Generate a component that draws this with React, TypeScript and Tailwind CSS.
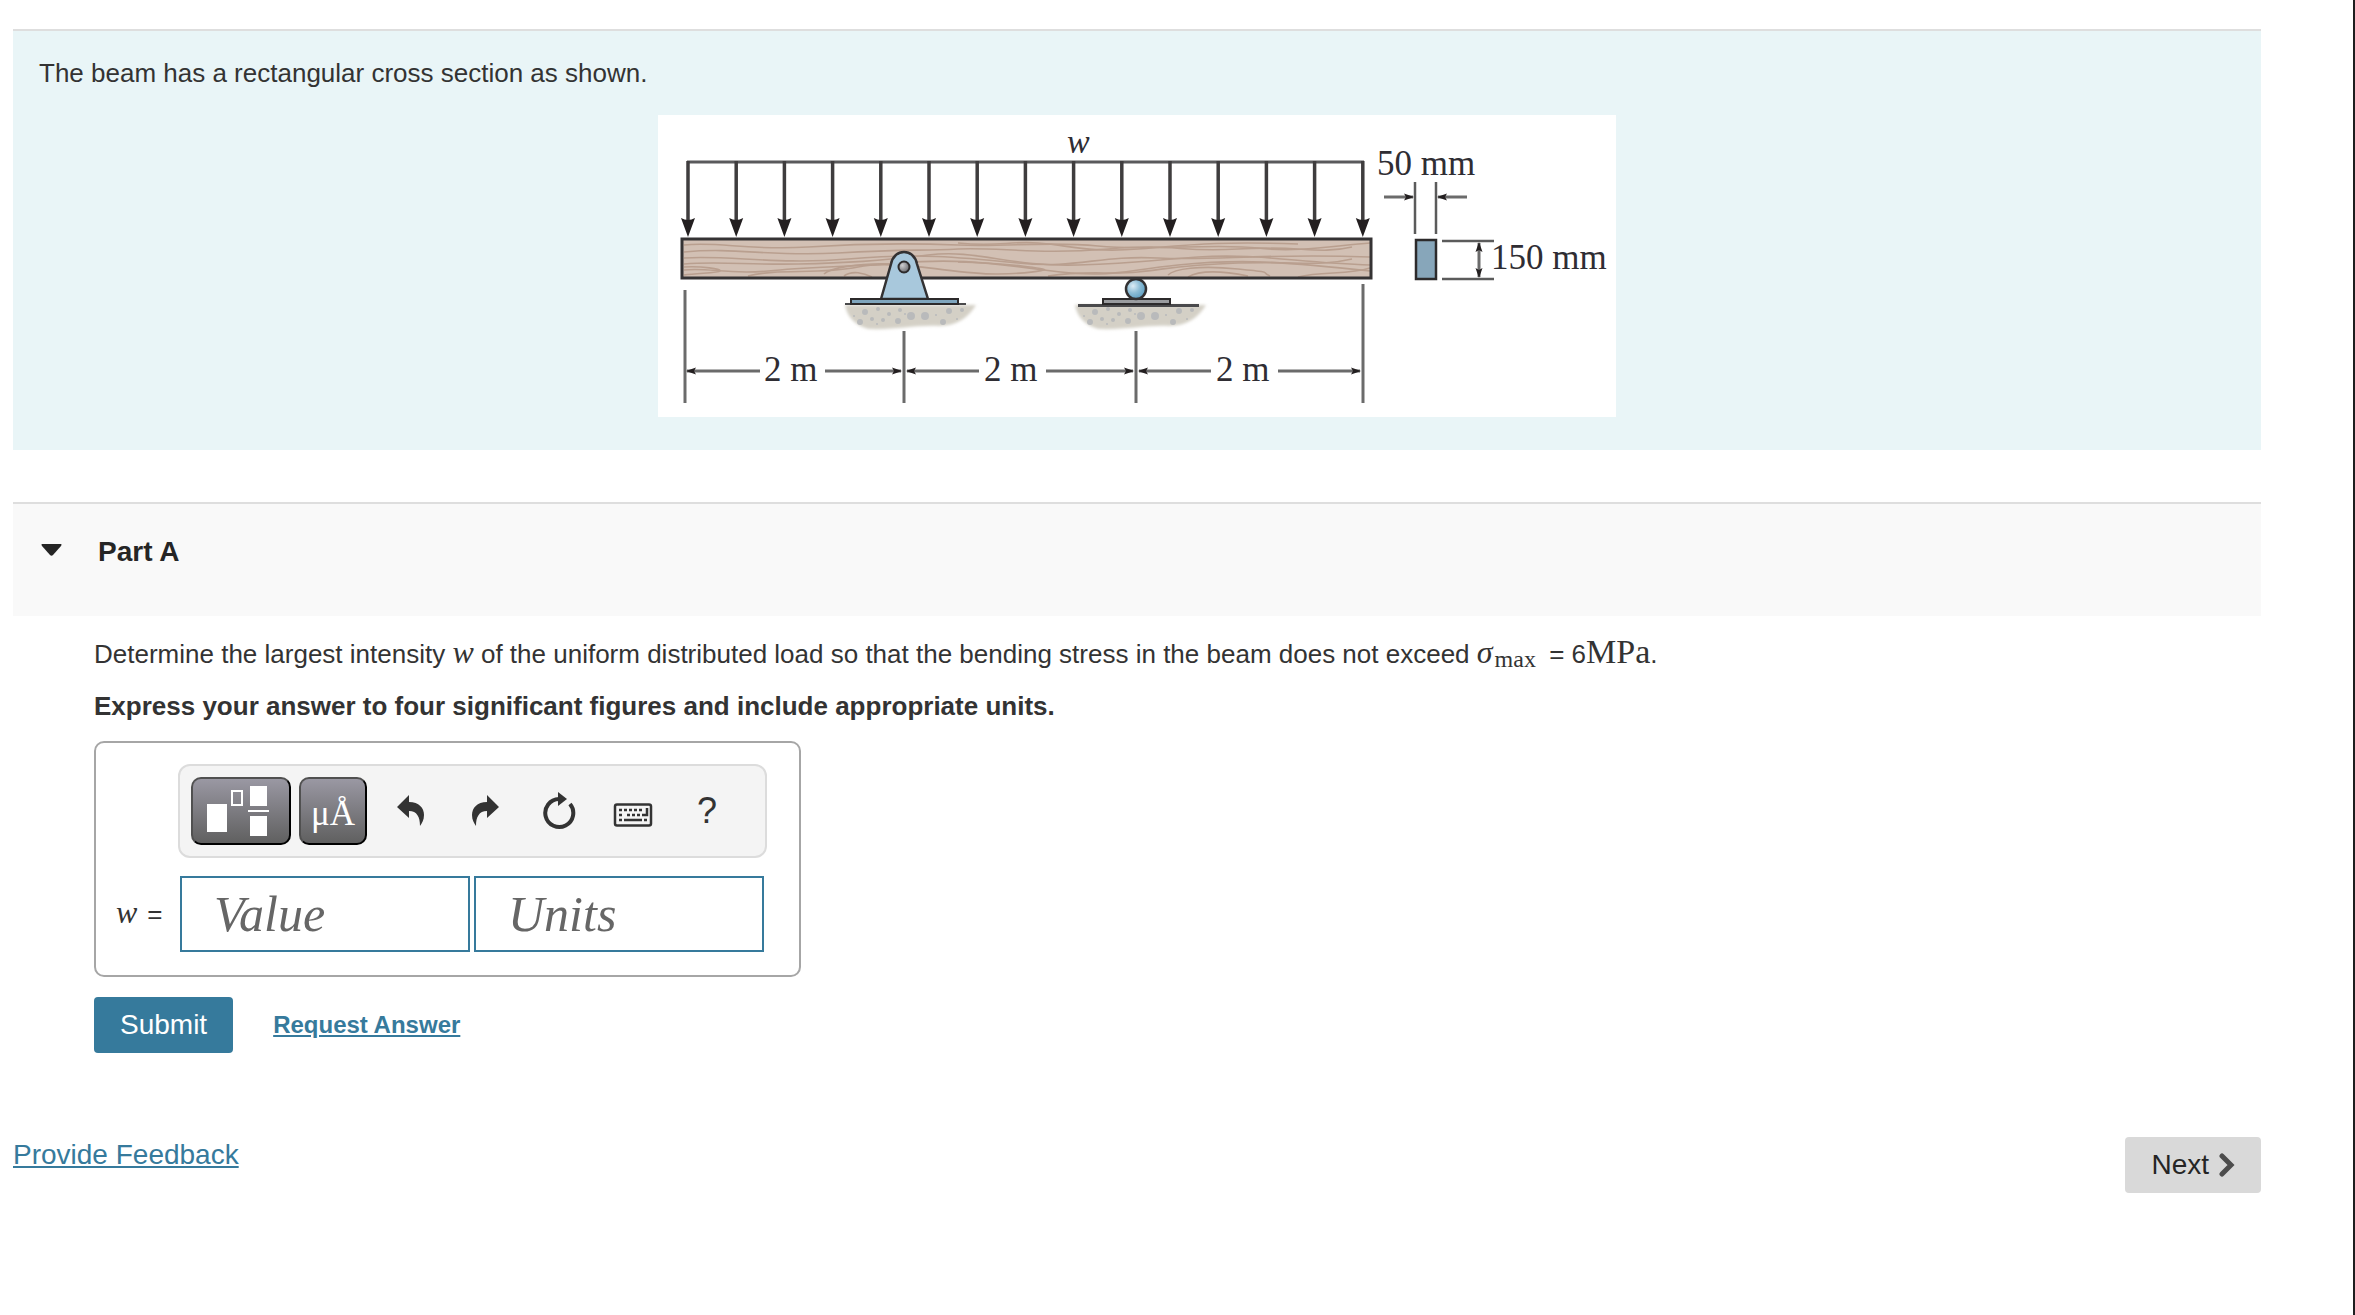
import React from 'react';

const LOAD_ARROWS = Array.from({ length: 15 }, (_, i) => 30 + i * 48.2);

const WOOD_GRAIN = [
  'M26 130 C60 126 90 136 150 132 S250 128 300 130 S390 126 440 131 S560 128 600 133 S680 130 712 128',
  'M26 137 C80 132 110 142 180 138 S260 136 300 134 S380 140 450 134 S520 138 580 134 S660 140 694 132',
  'M26 143 C70 140 120 150 190 144 S300 142 360 148 S440 140 500 143 S600 138 712 142',
  'M26 149 C60 146 90 150 140 149 S220 146 270 140 S350 152 420 150 S480 146 540 142 S640 148 712 150',
  'M26 155 C50 152 70 160 110 156 S190 152 240 148 S320 146 386 155 S460 156 520 150 S620 146 712 156',
  'M26 160 C40 158 60 158 62 156 S44 151 26 152',
  'M90 161 C120 153 160 160 200 152 S300 160 340 159 S380 156 386 155 S350 148 300 147',
  'M166 159 C172 153 200 148 232 149',
  'M186 161 C194 155 206 158 214 162',
  'M300 128 C340 132 350 126 380 128 S430 138 480 134 S560 126 640 129',
  'M390 161 C430 155 450 160 480 157 S520 150 580 148 S660 152 694 144',
  'M510 160 C516 154 540 150 580 154 S600 156 612 161',
  'M530 162 C540 156 560 155 590 161',
  'M640 162 C664 156 690 160 712 153',
];

const PEBBLES = [
  [20, 7, 3], [33, 4, 2], [44, 9, 2], [55, 5, 2], [66, 11, 4], [80, 11, 4],
  [104, 6, 3], [117, 5, 2], [27, 14, 2], [38, 15, 2], [15, 17, 3], [53, 16, 3],
  [98, 17, 3], [9, 11, 1], [91, 10, 1], [112, 14, 1], [60, 9, 1], [32, 19, 1],
];

interface GroundProps {
  x: number;
  y: number;
}

function Ground({ x, y }: GroundProps) {
  return (
    <g transform={`translate(${x} ${y})`}>
      <path
        d="M0 0 H131 C124 12 112 21 94 21 C70 20 50 25 24 24 C8 20 2 10 0 0Z"
        fill="#d4d0c6"
        filter="url(#soft)"
      />
      {PEBBLES.map(([cx, cy, r]) => (
        <circle key={`${cx}-${cy}`} cx={cx} cy={cy} r={r} fill="#b9babb" />
      ))}
    </g>
  );
}

interface DimensionProps {
  x1: number;
  y1: number;
  x2: number;
  y2: number;
}

// Thin line with the arrowhead at its second end
function Dimension({ x1, y1, x2, y2 }: DimensionProps) {
  return (
    <line x1={x1} y1={y1} x2={x2} y2={y2} stroke="#6b6b6b" strokeWidth="3" markerEnd="url(#tip)" />
  );
}

function BeamFigure() {
  return (
    <svg
      viewBox="0 0 958 302"
      className="w-[958px] max-w-full bg-white"
      role="img"
      aria-label="Beam with a uniform distributed load w, a pin and a roller support"
    >
      <defs>
        <marker id="tip" markerUnits="userSpaceOnUse" markerWidth="10" markerHeight="8" refX="9" refY="4" orient="auto">
          <path d="M0 0.5 L10 4 L0 7.5 L2 4Z" fill="#231f20" />
        </marker>
        <filter id="soft" x="-10%" y="-20%" width="120%" height="140%">
          <feGaussianBlur stdDeviation="1.5" />
        </filter>
        <radialGradient id="roller" cx="0.35" cy="0.35" r="0.7">
          <stop offset="0" stopColor="#dcecf5" />
          <stop offset="0.5" stopColor="#8dbdd6" />
          <stop offset="1" stopColor="#5c9dc0" />
        </radialGradient>
        <radialGradient id="pin" cx="0.35" cy="0.35" r="0.7">
          <stop offset="0" stopColor="#d0d0d2" />
          <stop offset="1" stopColor="#68686c" />
        </radialGradient>
      </defs>

      {/* Distributed load */}
      <path d="M29 47 H706" stroke="#5a5a5c" strokeWidth="3" />
      {LOAD_ARROWS.map((x) => (
        <g key={x}>
          <line x1={x} y1="46" x2={x} y2="106" stroke="#3f3d3e" strokeWidth="3.5" />
          <path d={`M${x - 7} 103 Q${x} 107 ${x + 7} 103 L${x} 122Z`} fill="#231f20" />
        </g>
      ))}

      {/* Beam */}
      <rect x="24" y="124" width="689" height="39" fill="#d2c0b4" />
      <g fill="none" stroke="#b99f8f" strokeWidth="1.6">
        {WOOD_GRAIN.map((d) => (
          <path key={d} d={d} />
        ))}
      </g>
      <rect x="24" y="124" width="689" height="39" fill="none" stroke="#353334" strokeWidth="3" />

      {/* Pin support */}
      <Ground x={187} y={190} />
      <path d="M187 189 H308" stroke="#4a4a4c" strokeWidth="2" />
      <path
        d="M223 184 L233 149 C236 133 256 133 259 149 L270 184Z"
        fill="#a8c8dc"
        stroke="#333132"
        strokeWidth="2.5"
      />
      <rect x="193" y="184" width="107" height="5" fill="#7fa5bd" stroke="#2c2a2b" strokeWidth="2" />
      <circle cx="246" cy="152" r="5.5" fill="url(#pin)" stroke="#2c2a2b" strokeWidth="2" />

      {/* Roller support */}
      <Ground x={417} y={190} />
      <path d="M420 190.500 H541" stroke="#4a4a4c" strokeWidth="3" />
      <rect x="445" y="184" width="67" height="5" fill="#9a9c9f" stroke="#2c2a2b" strokeWidth="2" />
      <circle cx="478" cy="174" r="10" fill="url(#roller)" stroke="#333132" strokeWidth="2.5" />

      {/* Span dimensions */}
      <g stroke="#6b6b6b" strokeWidth="3">
        <path d="M27 175 V288" />
        <path d="M246 216 V288" />
        <path d="M478 216 V288" />
        <path d="M705 169 V288" />
      </g>
      <Dimension x1={102} y1={256} x2={29} y2={256} />
      <Dimension x1={167} y1={256} x2={243} y2={256} />
      <Dimension x1={321} y1={256} x2={249} y2={256} />
      <Dimension x1={388} y1={256} x2={475} y2={256} />
      <Dimension x1={553} y1={256} x2={481} y2={256} />
      <Dimension x1={620} y1={256} x2={702} y2={256} />

      {/* Cross section */}
      <path d="M757 67 V119 M778 67 V119 M784 126 H836 M784 164 H836" stroke="#5b5b5b" strokeWidth="2.5" />
      <rect x="758" y="125" width="20" height="39" fill="#87a6ba" stroke="#2c2a2b" strokeWidth="2.5" />
      <Dimension x1={726} y1={82} x2={755} y2={82} />
      <Dimension x1={809} y1={82} x2={780} y2={82} />
      <Dimension x1={821} y1={145} x2={821} y2={128} />
      <Dimension x1={821} y1={145} x2={821} y2={162} />

      <g fill="#2f2d33" className="font-['Liberation_Serif',serif] text-[35px]">
        <text x="409" y="38" className="text-[34px] italic">w</text>
        <text x="719" y="60">50 mm</text>
        <text x="833" y="154">150 mm</text>
        <text x="106" y="266">2 m</text>
        <text x="326" y="266">2 m</text>
        <text x="558" y="266">2 m</text>
      </g>
    </svg>
  );
}

function TemplateIcon() {
  return (
    <svg viewBox="0 0 64 52" className="h-[52px] w-16" aria-hidden="true">
      <rect x="0" y="19" width="20" height="28" fill="#fff" />
      <rect x="25" y="6" width="10" height="14" fill="none" stroke="#fff" strokeWidth="2" />
      <rect x="43" y="1" width="17" height="20" fill="#fff" />
      <rect x="41" y="25" width="21" height="2" fill="#fff" />
      <rect x="43" y="31" width="17" height="20" fill="#fff" />
    </svg>
  );
}

function UndoIcon({ flipped = false }: { flipped?: boolean }) {
  return (
    <svg viewBox="0 0 28 32" className="h-8 w-7" aria-hidden="true">
      <path
        transform={flipped ? 'matrix(-1 0 0 1 28 0)' : undefined}
        d="M0 12 L12 0 V7 C22 7 27 13 27 20 C27 25 25 28 23 31 C23 22 20 16 12 16 V23Z"
        fill="#333"
      />
    </svg>
  );
}

function ResetIcon() {
  return (
    <svg viewBox="0 0 34 38" className="h-[38px] w-[34px]" aria-hidden="true">
      <path d="M17 7 A14 14 0 1 0 28 12" fill="none" stroke="#333" strokeWidth="4" />
      <path d="M16 0 L25 7 L16 14Z" fill="#333" />
    </svg>
  );
}

function KeyboardIcon() {
  return (
    <svg viewBox="0 0 40 24" className="h-6 w-10" aria-hidden="true">
      <rect x="2" y="1.500" width="36" height="21" rx="2" fill="none" stroke="#333" strokeWidth="2.5" />
      <g fill="none" stroke="#333" strokeWidth="2.5">
        <path d="M6 7 H30" strokeDasharray="3 2" />
        <path d="M34 5 V12 H29" />
        <path d="M6 12 H11 M14 12 H27" strokeDasharray="3 2" />
        <path d="M6 17 H9 M11 17 H29 M31 17 H34" />
      </g>
    </svg>
  );
}

interface ToolButtonProps {
  label: string;
  children: React.ReactNode;
}

function ToolButton({ label, children }: ToolButtonProps) {
  return (
    <button
      type="button"
      aria-label={label}
      className="flex h-12 w-12 items-center justify-center text-[36px] leading-none text-[#333]"
    >
      {children}
    </button>
  );
}

const DARK_BUTTON =
  'flex h-[68px] items-center rounded-[10px] border-2 border-t-[#505050] border-l-[#505050] border-r-black border-b-black bg-linear-to-b from-[#9a98a3] to-[#606060] text-white';

const ANSWER_INPUT =
  "h-[76px] w-[290px] border-2 border-[#367a9c] bg-white px-8 font-['Liberation_Serif',serif] text-[50px] italic text-[#333] placeholder:text-[#666] placeholder:opacity-100";

function MathVar({ children }: { children: React.ReactNode }) {
  return (
    <span className="font-['Liberation_Serif',serif] text-[32px] leading-0 italic">{children}</span>
  );
}

function AnswerBox() {
  return (
    <div className="w-fit rounded-[10px] border-2 border-[#a6a6a6] pt-[21px] pr-8 pb-[23px] pl-5">
      <div className="ml-[62px] flex h-[94px] items-center rounded-xl border-2 border-[#dcdcdc] bg-[#f4f4f4] pr-[34px] pl-[11px]">
        <button type="button" aria-label="Templates" className={`${DARK_BUTTON} w-[100px] pl-[14px]`}>
          <TemplateIcon />
        </button>
        <button
          type="button"
          aria-label="Symbols"
          className={`${DARK_BUTTON} ml-2 w-[68px] justify-center pt-1 font-['Liberation_Serif',serif] text-[35px] leading-none`}
        >
          μÅ
        </button>
        <div className="ml-5 flex items-center gap-[26px]">
          <ToolButton label="Undo"><UndoIcon /></ToolButton>
          <ToolButton label="Redo"><UndoIcon flipped /></ToolButton>
          <ToolButton label="Reset"><ResetIcon /></ToolButton>
          <ToolButton label="Keyboard shortcuts"><span className="pt-2"><KeyboardIcon /></span></ToolButton>
          <ToolButton label="Help">?</ToolButton>
        </div>
      </div>
      <div className="mt-[18px] flex items-center">
        <label htmlFor="value" className="flex w-16 items-baseline gap-2.5 text-[26px] leading-8">
          <MathVar>w</MathVar> =
        </label>
        <div className="flex gap-1">
          <input id="value" type="text" placeholder="Value" className={ANSWER_INPUT} />
          <input type="text" placeholder="Units" aria-label="Units" className={ANSWER_INPUT} />
        </div>
      </div>
    </div>
  );
}

export default function App() {
  return (
    <div className="min-h-screen border-r-2 border-[#1f1f1f] bg-white pt-[29px] pr-[92px] pl-[13px] font-['Liberation_Sans',Arial,sans-serif] text-[26px] leading-8 text-[#333]">
      <section className="border-t-2 border-[#dedede] bg-[#e9f5f7] px-[26px] pt-[26px] pb-[33px]">
        <p>The beam has a rectangular cross section as shown.</p>
        <div className="mt-[26px] flex justify-center">
          <BeamFigure />
        </div>
      </section>

      <section className="mt-[52px]">
        <h2 className="border-t-2 border-[#dedede] bg-[#f9f9f9] pt-8 pr-7 pb-12 pl-7">
          <button type="button" aria-expanded="true" className="flex items-center gap-9 text-[28px] leading-8 font-bold text-[#252525]">
            <svg viewBox="0 0 21 12" className="mb-1 h-3 w-[21px]" aria-hidden="true">
              <path d="M1 0 H20 Q21 0 20 2 L12 11 Q10.500 12.500 9 11 L1 2 Q0 0 1 0Z" fill="#252525" />
            </svg>
            Part A
          </button>
        </h2>

        <div className="pl-[81px]">
          <p className="pt-[22px]">
            Determine the largest intensity <MathVar>w</MathVar> of the uniform distributed load so that the
            bending stress in the beam does not exceed <MathVar>σ</MathVar>
            <span className="mr-1.5 ml-0.5 align-[-4px] font-['Liberation_Serif',serif] text-[24px] leading-0">max</span> = 6
            <span className="font-['Liberation_Serif',serif] text-[34px] leading-0">MPa</span>.
          </p>
          <p className="mt-5 font-bold">
            Express your answer to four significant figures and include appropriate units.
          </p>
          <div className="mt-[19px]">
            <AnswerBox />
          </div>
          <div className="mt-5 flex items-center gap-10">
            <button type="button" className="h-14 rounded-[4px] bg-[#367a9c] px-[26px] text-[28px] text-white">
              Submit
            </button>
            <a href="#answer" className="text-[24px] font-bold text-[#367a9c] underline">
              Request Answer
            </a>
          </div>
        </div>
      </section>

      <footer className="mt-[84px] flex items-start justify-between">
        <a href="#feedback" className="pt-0.5 text-[28px] text-[#367a9c] underline">
          Provide Feedback
        </a>
        <button
          type="button"
          className="flex h-14 items-center gap-2.5 rounded-[4px] bg-[#d9d9d9] px-[26px] text-[28px] text-[#252525]"
        >
          Next
          <svg viewBox="0 0 16 24" className="h-6 w-4" aria-hidden="true">
            <path d="M3 3 L12 12 L3 21" fill="none" stroke="#4d4d4d" strokeWidth="5" strokeLinecap="round" />
          </svg>
        </button>
      </footer>
    </div>
  );
}
